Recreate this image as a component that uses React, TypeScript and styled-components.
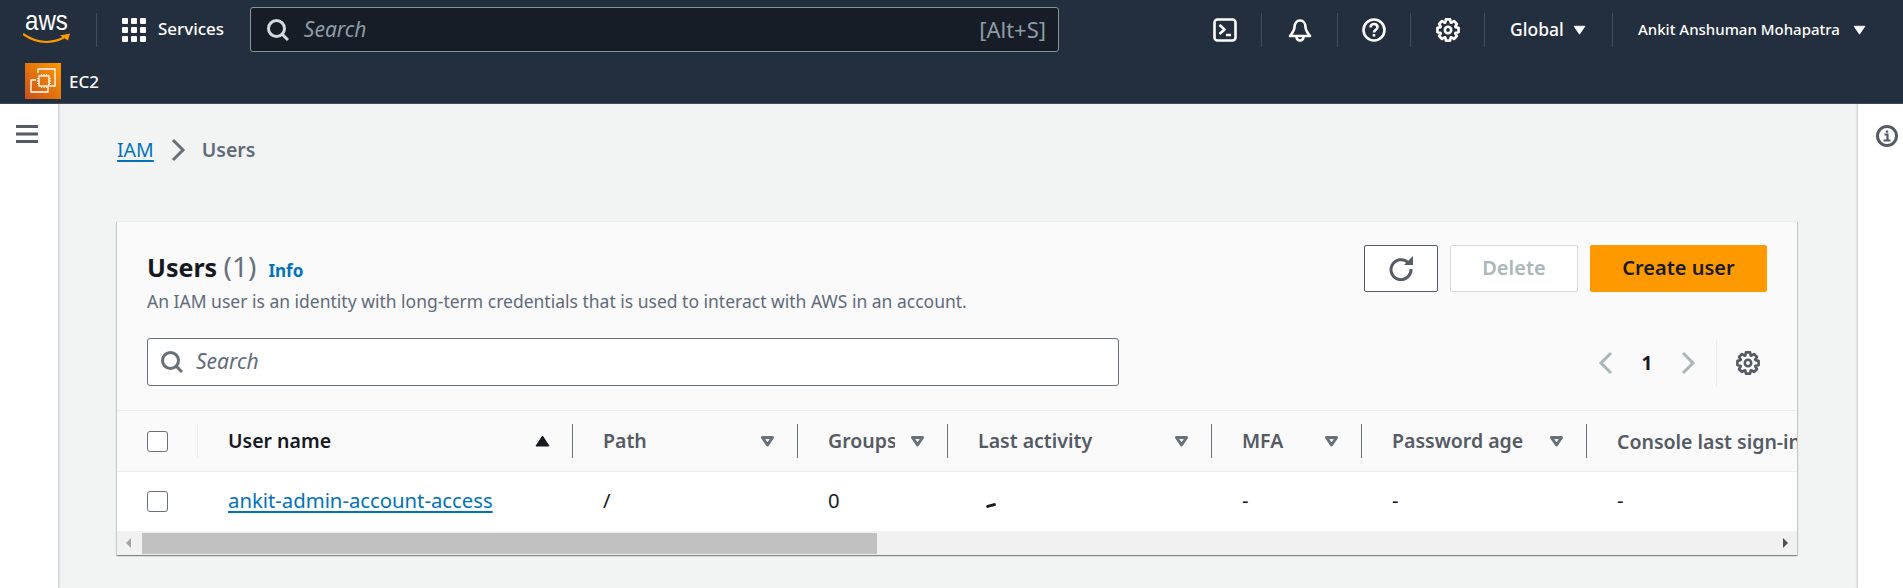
import React from 'react';
import styled, { createGlobalStyle } from 'styled-components';

const GlobalStyle = createGlobalStyle`
  html, body {
    margin: 0;
    height: 100%;
    overflow: hidden;
    background: #f2f3f3;
    font-family: "Noto Sans", "Open Sans", sans-serif;
  }
  * { box-sizing: border-box; }
`;

const Page = styled.div`
  display: flex;
  flex-flow: column nowrap;
  width: 1903px;
  height: 588px;
`;

const TopNav = styled.header`
  display: flex;
  flex-flow: column nowrap;
  height: 104px;
  background: #232f3e;
  border-bottom: 1px solid #414d5c;
  color: #fff;
`;

const NavRow = styled.div`
  display: flex;
  align-items: center;
  height: 59px;
`;

const LogoBox = styled.div`
  display: flex;
  flex-flow: column nowrap;
  width: 96px;
  padding-left: 23px;
`;

const LogoWord = styled.span`
  height: 11px;
  margin: 0 0 7px 2px;
  font: 28px/11px "Liberation Sans", sans-serif;
  color: #fff;
  transform: scaleX(0.86);
  transform-origin: left center;
`;

const NavDivider = styled.span`
  width: 1px;
  height: 34px;
  background: #414d5c;
`;

const ServicesButton = styled.div`
  display: flex;
  align-items: center;
  gap: 12px;
  width: 153px;
  padding-left: 25px;
  font-size: 17px;
  font-weight: 500;
`;

const RaisedText = styled.span`
  padding-bottom: 2px;
`;

const GlobalSearch = styled.div`
  display: flex;
  align-items: center;
  width: 810px;
  height: 45px;
  padding: 0 12px 0 16px;
  background: #161d26;
  border: 1px solid #879596;
  border-radius: 3px;
`;

const SearchHint = styled.span<{ $dark?: boolean }>`
  flex: 1;
  margin-left: ${p => (p.$dark ? '15px' : '13px')};
  padding-bottom: 2px;
  font-size: 21px;
  font-style: italic;
  color: ${p => (p.$dark ? '#8d9ba6' : '#5f6b7a')};
`;

const Shortcut = styled.span`
  padding-bottom: 2px;
  font-size: 22px;
  color: #8d9ba6;
`;

const NavIcons = styled.div`
  display: flex;
  align-items: center;
  margin-left: 130px;
`;

const NavIcon = styled.div<{ $w: number }>`
  display: flex;
  justify-content: center;
  width: ${p => p.$w}px;
`;

const NavMenu = styled.div<{ $w: number; $size: number; $gap: number }>`
  display: flex;
  align-items: center;
  gap: ${p => p.$gap}px;
  width: ${p => p.$w}px;
  padding-left: 25px;
  font-size: ${p => p.$size}px;
  font-weight: 500;
  white-space: nowrap;
`;

const ServiceRow = styled.div`
  display: flex;
  align-items: center;
  gap: 8px;
  padding: 4px 0 0 25px;
  font-size: 17px;
  font-weight: 500;
`;

const Body = styled.div`
  display: flex;
  flex: 1;
  min-height: 0;
`;

const SideRail = styled.aside<{ $right?: boolean }>`
  display: flex;
  justify-content: center;
  flex: none;
  width: ${p => (p.$right ? '46px' : '59px')};
  padding-top: 21px;
  padding-left: ${p => (p.$right ? '12px' : '0')};
  padding-right: ${p => (p.$right ? '0' : '5px')};
  background: #fff;
  ${p => (p.$right ? 'border-left: 1px solid #d1d5db;' : 'border-right: 1px solid #d1d5db;')}
  box-shadow: 0 0 2px rgba(0, 28, 36, 0.2);
`;

const Main = styled.main`
  flex: 1;
  min-width: 0;
  padding: 32px 60px 0 58px;
`;

const Crumbs = styled.nav`
  display: flex;
  align-items: center;
  gap: 16px;
  height: 27px;
  font-size: 19.5px;
`;

const CrumbLink = styled.a`
  color: #0073bb;
  text-decoration: underline;
  text-decoration-thickness: 2px;
  text-underline-offset: 3px;
`;

const CrumbCurrent = styled.span`
  color: #5f6b7a;
  font-weight: 600;
`;

const Card = styled.section`
  margin-top: 58px;
  background: #fafafa;
  border-top: 1px solid #eaeded;
  box-shadow: 0 1px 1px 0 rgba(0, 28, 36, 0.3), 1px 1px 1px 0 rgba(0, 28, 36, 0.15), -1px 1px 1px 0 rgba(0, 28, 36, 0.15);
`;

const CardHeader = styled.div`
  display: flex;
  justify-content: space-between;
  height: 116px;
  padding: 23px 30px 0 30px;
`;

const TitleLine = styled.div`
  display: flex;
  align-items: baseline;
  gap: 12px;
  height: 44px;
  padding-top: 2px;
`;

const Title = styled.h1`
  margin: 0;
  font-size: 25px;
  font-weight: 700;
  color: #16191f;
`;

const Count = styled.span`
  font-size: 28px;
  font-weight: 400;
  color: #687078;
`;

const InfoLink = styled.a`
  font-size: 17px;
  font-weight: 700;
  color: #0073bb;
`;

const Description = styled.p`
  margin: 0;
  font-size: 17.5px;
  color: #5f6b7a;
`;

const Actions = styled.div`
  display: flex;
  gap: 12px;
`;

const ActionButton = styled.button<{ $kind: 'icon' | 'disabled' | 'primary' }>`
  display: flex;
  align-items: center;
  justify-content: center;
  height: 47px;
  padding: 0 0 2px;
  font: 600 20px "Noto Sans", sans-serif;
  border-radius: 2px;
  width: ${p => (p.$kind === 'icon' ? '74px' : p.$kind === 'disabled' ? '128px' : '177px')};
  background: ${p => (p.$kind === 'primary' ? '#ff9900' : '#fff')};
  color: ${p => (p.$kind === 'disabled' ? '#aab7b8' : '#16191f')};
  border: 1px solid ${p => (p.$kind === 'icon' ? '#545b64' : p.$kind === 'disabled' ? '#d5dbdb' : '#ff9900')};
`;

const FilterRow = styled.div`
  display: flex;
  align-items: flex-start;
  justify-content: space-between;
  height: 73px;
  padding: 0 37px 0 30px;
  border-bottom: 1px solid #eaeded;
`;

const TableSearch = styled.div`
  display: flex;
  align-items: center;
  width: 972px;
  height: 48px;
  padding-left: 13px;
  background: #fff;
  border: 1px solid #687078;
  border-radius: 3px;
`;

const Pager = styled.div`
  display: flex;
  align-items: center;
  height: 50px;
`;

const PageNumber = styled.span`
  width: 66px;
  text-align: center;
  font-size: 19px;
  font-weight: 700;
  color: #16191f;
`;

const PagerDivider = styled.span`
  width: 1px;
  height: 47px;
  margin: 0 19px 0 20px;
  background: #eaeded;
`;

const Table = styled.div`
  overflow: hidden;
`;

const Row = styled.div<{ $head?: boolean }>`
  display: grid;
  grid-template-columns: 81px 375px 225px 150px 264px 150px 225px 300px;
  align-items: center;
  height: ${p => (p.$head ? '61px' : '59px')};
  background: ${p => (p.$head ? '#fafafa' : '#fff')};
  border-bottom: ${p => (p.$head ? '1px solid #eaeded' : 'none')};
`;

const CheckCell = styled.div<{ $head?: boolean }>`
  display: flex;
  align-items: center;
  height: 34px;
  padding-left: 30px;
  ${p => p.$head && 'border-right: 1px solid #eaeded;'}
`;

const Box = styled.span`
  width: 21px;
  height: 21px;
  background: #fff;
  border: 1px solid #687078;
  border-radius: 3px;
`;

const HeadCell = styled.div<{ $active?: boolean; $plain?: boolean }>`
  display: flex;
  align-items: center;
  height: 34px;
  padding: 0 22px 0 30px;
  font-size: 19.5px;
  font-weight: 600;
  white-space: nowrap;
  color: ${p => (p.$active ? '#16191f' : '#545b64')};
  border-right: ${p => (p.$plain ? 'none' : '1px solid #687078')};
`;

const HeadLabel = styled.span`
  flex: 1;
  min-width: 0;
  margin-right: 15px;
  padding-bottom: 2px;
  overflow: hidden;
`;

const Cell = styled.div`
  padding: 0 0 3px 30px;
  font-size: 20.3px;
  color: #16191f;
  white-space: nowrap;
`;

const UserLink = styled.a`
  color: #0073bb;
  text-decoration: underline;
  text-decoration-thickness: 2px;
  text-underline-offset: 3px;
`;

const Smudge = styled.span`
  display: block;
  width: 10px;
  height: 3px;
  margin: 11px 0 0 8px;
  background: #16191f;
  border-radius: 2px;
  transform: rotate(-15deg);
`;

const ScrollBar = styled.div`
  display: flex;
  align-items: center;
  height: 24px;
  padding: 0 9px;
  background: #f1f1f1;
`;

const ScrollThumb = styled.div`
  width: 735px;
  height: 21px;
  margin-left: 11px;
  background: #c1c1c1;
`;

const ScrollSpacer = styled.div`
  flex: 1;
`;

const ScrollArrow = styled.span<{ $dir: 'left' | 'right' }>`
  width: 0;
  height: 0;
  border-top: 5px solid transparent;
  border-bottom: 5px solid transparent;
  ${p => (p.$dir === 'left' ? 'border-right: 5px solid #a3a3a3;' : 'border-left: 5px solid #505050;')}
`;

const AwsSmile = () => (
  <svg width="48" height="11" viewBox="0 0 48 11">
    <path d="M0 1c7 5 14 8 23 8 6 0 12-1.500 18-4.500" fill="none" stroke="#ff9900" strokeWidth="2.200" />
    <path d="M37 2.500l10-2-2 7z" fill="#ff9900" />
  </svg>
);

const GridIcon = () => (
  <svg width="24" height="24" viewBox="0 0 24 24" fill="#fff">
    {[0, 9, 18].map(y =>
      [0, 9, 18].map(x => <rect key={`${x}-${y}`} x={x} y={y} width="6" height="6" rx="1" />)
    )}
  </svg>
);

const SearchIcon = ({ color }: { color: string }) => (
  <svg width="22" height="22" viewBox="0 0 22 22" fill="none" stroke={color} strokeWidth="3">
    <circle cx="9.5" cy="9.5" r="8" />
    <path d="M15 15l6 6" />
  </svg>
);

const Ec2Tile = () => (
  <svg width="36" height="36" viewBox="0 0 36 36">
    <defs>
      <linearGradient id="ec2" x1="0" y1="1" x2="1" y2="0">
        <stop offset="0" stopColor="#c8511b" />
        <stop offset="1" stopColor="#ff9900" />
      </linearGradient>
    </defs>
    <rect width="36" height="36" fill="url(#ec2)" />
    <path d="M13 10V6h17v17h-5M11 17H6v12h17v-5" fill="none" stroke="#fff" strokeWidth="1.300" />
    <rect x="14" y="13" width="10" height="10" fill="none" stroke="#fff" strokeWidth="1.300" />
    <path d="M16.500 11v2M19 11v2M21.500 11v2M16.500 23v2M19 23v2M21.500 23v2M12 15.500h2M12 18h2M12 20.500h2M24 15.500h2M24 18h2M24 20.500h2" stroke="#fff" strokeWidth="1" />
  </svg>
);

const ConsoleIcon = () => (
  <svg width="24" height="24" viewBox="0 0 24 24" fill="none" stroke="#fff" strokeWidth="2.600">
    <rect x="1.500" y="1.500" width="21" height="21" rx="3" />
    <path d="M6.500 7l5 4.500-5 4.500M13 17h5" />
  </svg>
);

const BellIcon = () => (
  <svg width="24" height="24" viewBox="0 0 24 24" fill="none" stroke="#fff" strokeWidth="2.600" strokeLinejoin="round">
    <path d="M12 2.500c-3.500 0-5.500 3-5.500 6.500 0 3.500-2 6-4.500 9h20c-2.500-3-4.500-5.500-4.500-9 0-3.500-2-6.500-5.500-6.500z" />
    <path d="M8.500 18c0 3 1.500 4.500 3.500 4.500s3.500-1.500 3.500-4.500" />
  </svg>
);

const HelpIcon = () => (
  <svg width="24" height="24" viewBox="0 0 24 24" fill="none" stroke="#fff" strokeWidth="2.600">
    <circle cx="12" cy="12" r="10.500" />
    <path d="M8.500 9.500c0-2 1.500-3.500 3.500-3.500s3.500 1.300 3.500 3.300c0 2.500-3.500 2.500-3.500 5.200" />
    <path d="M12 16v2.500" />
  </svg>
);

// eight chunky teeth, worked out once rather than typed point by point
const gearPoints = Array.from({ length: 8 }, (_, i) => {
  const mid = (i * Math.PI) / 4;
  return [
    [mid - 0.34, 8],
    [mid - 0.2, 10.8],
    [mid + 0.2, 10.8],
    [mid + 0.34, 8],
  ];
})
  .flat()
  .map(([a, r]) => `${(12 + r * Math.cos(a)).toFixed(2)},${(12 + r * Math.sin(a)).toFixed(2)}`)
  .join(' ');

const GearIcon = ({ color, size }: { color: string; size: number }) => (
  <svg width={size} height={size} viewBox="0 0 24 24" fill="none" stroke={color} strokeWidth="2.600" strokeLinejoin="round">
    <polygon points={gearPoints} />
    <circle cx="12" cy="12" r="3.200" />
  </svg>
);

const Caret = ({ up, outline, color, small }: { up?: boolean; outline?: boolean; color: string; small?: boolean }) => (
  <svg width={small ? 13 : 15} height={small ? 10 : 12} viewBox="0 0 15 12">
    <path
      d={up ? 'M7.500 1L14 11H1z' : outline ? 'M2.500 2.500h10L7.500 10z' : 'M1 1.500h13L7.500 11z'}
      fill={outline ? 'none' : color}
      stroke={color}
      strokeWidth={outline ? 3 : 1}
      strokeLinejoin="round"
    />
  </svg>
);

const Chevron = ({ left, color }: { left?: boolean; color: string }) => (
  <svg width="16" height="24" viewBox="0 0 16 24" fill="none" stroke={color} strokeWidth="3">
    <path d={left ? 'M13 2L3 12l10 10' : 'M3 2l10 10L3 22'} />
  </svg>
);

const RefreshIcon = () => (
  <svg width="26" height="26" viewBox="0 0 26 26" fill="none" stroke="#545b64" strokeWidth="3">
    <path d="M20 7.500A10 10 0 1 0 23 14" />
    <path d="M16 10h9V1z" fill="#545b64" stroke="none" />
  </svg>
);

const InfoIcon = () => (
  <svg width="22" height="22" viewBox="0 0 22 22" fill="none" stroke="#545b64" strokeWidth="3">
    <circle cx="11" cy="11" r="9.500" />
    <path d="M8.500 9.500h3v6M7.500 15.500h7" strokeWidth="2.200" />
    <path d="M11 5.500v2.200" strokeWidth="2.400" />
  </svg>
);

const MenuIcon = () => (
  <svg width="22" height="18" viewBox="0 0 22 18" fill="#545b64">
    <rect width="22" height="3" />
    <rect y="7.500" width="22" height="3" />
    <rect y="15" width="22" height="3" />
  </svg>
);

const columns = ['Path', 'Groups', 'Last activity', 'MFA', 'Password age'];

const App = () => (
  <Page>
    <GlobalStyle />
    <TopNav>
      <NavRow>
        <LogoBox>
          <LogoWord>aws</LogoWord>
          <AwsSmile />
        </LogoBox>
        <NavDivider />
        <ServicesButton>
          <GridIcon />
          <RaisedText>Services</RaisedText>
        </ServicesButton>
        <GlobalSearch>
          <SearchIcon color="#d5dbdb" />
          <SearchHint $dark>Search</SearchHint>
          <Shortcut>[Alt+S]</Shortcut>
        </GlobalSearch>
        <NavIcons>
          <NavIcon $w={72}><ConsoleIcon /></NavIcon>
          <NavDivider />
          <NavIcon $w={75}><BellIcon /></NavIcon>
          <NavDivider />
          <NavIcon $w={72}><HelpIcon /></NavIcon>
          <NavDivider />
          <NavIcon $w={73}><GearIcon color="#fff" size={24} /></NavIcon>
          <NavDivider />
          <NavMenu $w={127} $size={17.5} $gap={9}><RaisedText>Global</RaisedText> <Caret small color="#fff" /></NavMenu>
          <NavDivider />
          <NavMenu $w={290} $size={15} $gap={13}><RaisedText>Ankit Anshuman Mohapatra</RaisedText> <Caret small color="#fff" /></NavMenu>
        </NavIcons>
      </NavRow>
      <ServiceRow>
        <Ec2Tile />
        EC2
      </ServiceRow>
    </TopNav>
    <Body>
      <SideRail>
        <MenuIcon />
      </SideRail>
      <Main>
        <Crumbs>
          <CrumbLink>IAM</CrumbLink>
          <Chevron color="#687078" />
          <CrumbCurrent>Users</CrumbCurrent>
        </Crumbs>
        <Card>
          <CardHeader>
            <div>
              <TitleLine>
                <Title>Users <Count>(1)</Count></Title>
                <InfoLink>Info</InfoLink>
              </TitleLine>
              <Description>
                An IAM user is an identity with long-term credentials that is used to interact with AWS in an account.
              </Description>
            </div>
            <Actions>
              <ActionButton $kind="icon"><RefreshIcon /></ActionButton>
              <ActionButton $kind="disabled">Delete</ActionButton>
              <ActionButton $kind="primary">Create user</ActionButton>
            </Actions>
          </CardHeader>
          <FilterRow>
            <TableSearch>
              <SearchIcon color="#687078" />
              <SearchHint>Search</SearchHint>
            </TableSearch>
            <Pager>
              <Chevron left color="#aab7b8" />
              <PageNumber>1</PageNumber>
              <Chevron color="#aab7b8" />
              <PagerDivider />
              <GearIcon color="#545b64" size={24} />
            </Pager>
          </FilterRow>
          <Table>
            <Row $head>
              <CheckCell $head><Box /></CheckCell>
              <HeadCell $active>
                <HeadLabel>User name</HeadLabel>
                <Caret up color="#16191f" />
              </HeadCell>
              {columns.map(name => (
                <HeadCell key={name}>
                  <HeadLabel>{name}</HeadLabel>
                  <Caret outline color="#687078" />
                </HeadCell>
              ))}
              <HeadCell $plain>Console last sign-in</HeadCell>
            </Row>
            <Row>
              <CheckCell><Box /></CheckCell>
              <Cell><UserLink>ankit-admin-account-access</UserLink></Cell>
              <Cell>/</Cell>
              <Cell>0</Cell>
              <Cell><Smudge /></Cell>
              <Cell>-</Cell>
              <Cell>-</Cell>
              <Cell>-</Cell>
            </Row>
            <ScrollBar>
              <ScrollArrow $dir="left" />
              <ScrollThumb />
              <ScrollSpacer />
              <ScrollArrow $dir="right" />
            </ScrollBar>
          </Table>
        </Card>
      </Main>
      <SideRail $right>
        <InfoIcon />
      </SideRail>
    </Body>
  </Page>
);

export default App;
